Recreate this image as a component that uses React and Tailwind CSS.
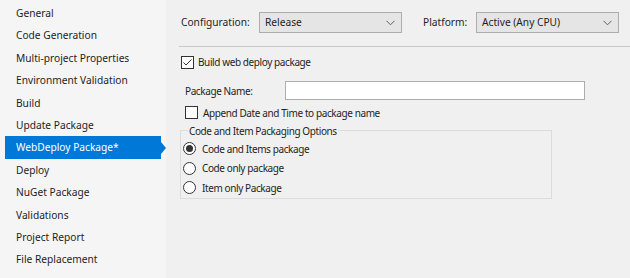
import React from 'react';

const pages = [
  'General',
  'Code Generation',
  'Multi-project Properties',
  'Environment Validation',
  'Build',
  'Update Package',
  'WebDeploy Package*',
  'Deploy',
  'NuGet Package',
  'Validations',
  'Project Report',
  'File Replacement',
];

const segoe = { fontFamily: '"Noto Sans", "Open Sans", sans-serif' };

const Chevron = () => (
  <svg width="9" height="6" viewBox="0 0 9 6" className="shrink-0">
    <path d="M0.5 0.8 L4.5 4.8 L8.5 0.8" fill="none" stroke="#606060" strokeWidth="1" />
  </svg>
);

const Dropdown = ({ value, width }) => (
  <div className={`flex items-center justify-between h-[21px] pl-[5px] pr-[6px] bg-[#e5e5e5] border border-[#adadad] ${width}`}>
    <span>{value}</span>
    <Chevron />
  </div>
);

const CheckBox = ({ checked }) => (
  <div className="w-[13px] h-[13px] border border-[#333333] bg-white flex items-center justify-center shrink-0">
    {checked && (
      <svg width="11" height="11" viewBox="0 0 11 11">
        <path d="M1.5 5.5 L4 8 L9.5 2.5" fill="none" stroke="#333333" strokeWidth="1" />
      </svg>
    )}
  </div>
);

const Radio = ({ checked }) => (
  <div className="w-[13px] h-[13px] rounded-full border border-[#333333] bg-white flex items-center justify-center shrink-0">
    {checked && <div className="w-[7px] h-[7px] rounded-full bg-[#333333]" />}
  </div>
);

export default function App() {
  return (
    <div className="w-[630px] h-[278px] flex bg-[#f0f0f0] text-[#1e1e1e] leading-none overflow-hidden" style={segoe}>
      <div className="w-[166px] shrink-0 bg-[#f5f5f5] pt-[2px] text-[10.2px]">
        {pages.map((p, i) =>
          i === 6 ? (
            <div key={p} className="relative h-[22.4px] ml-[5px] w-[156px] bg-[#0078d7] text-white flex items-center pl-[11px]">
              {p}
              <div className="absolute right-[-5px] top-1/2 -translate-y-1/2 w-0 h-0 border-y-[6px] border-y-transparent border-l-[5px] border-l-[#0078d7]" />
            </div>
          ) : (
            <div key={p} className="h-[22.4px] flex items-center pl-[16px]">
              {p}
            </div>
          )
        )}
      </div>

      <div className="flex-1 pl-[13px] text-[10px] tracking-[-0.4px]">
        <div className="flex items-center mt-[12px] pl-[2px] text-[10.2px] tracking-normal">
          <span className="w-[78px]">Configuration:</span>
          <Dropdown value="Release" width="w-[143px]" />
          <span className="ml-[21px] w-[53px]">Platform:</span>
          <Dropdown value="Active (Any CPU)" width="w-[143px]" />
        </div>

        <div className="mt-[13px] h-px bg-[#c8c8c8]" />

        <div className="flex items-center gap-[4px] h-[14px] mt-[8px] pl-[2px]">
          <CheckBox checked />
          <span>Build web deploy package</span>
        </div>

        <div className="flex items-center mt-[12px] pl-[6px]">
          <span className="w-[100px]">Package Name:</span>
          <div className="w-[300px] h-[19px] bg-white border border-[#adadad]" />
        </div>

        <div className="flex items-center gap-[5px] h-[13px] mt-[6px] pl-[6px]">
          <CheckBox />
          <span>Append Date and Time to package name</span>
        </div>

        <div className="relative mt-[11px] ml-[1px] w-[372px] h-[69px] border border-[#dcdcdc]">
          <span className="absolute left-[7px] top-[-7px] px-[1px] bg-[#f0f0f0] leading-[14px]">
            Code and Item Packaging Options
          </span>
          <div className="flex flex-col gap-[6.5px] pt-[11px] pl-[2px]">
            <div className="flex items-center gap-[6px] h-[13px]">
              <Radio checked />
              <span>Code and Items package</span>
            </div>
            <div className="flex items-center gap-[6px] h-[13px]">
              <Radio />
              <span>Code only package</span>
            </div>
            <div className="flex items-center gap-[6px] h-[13px]">
              <Radio />
              <span>Item only Package</span>
            </div>
          </div>
        </div>
      </div>
    </div>
  );
}
